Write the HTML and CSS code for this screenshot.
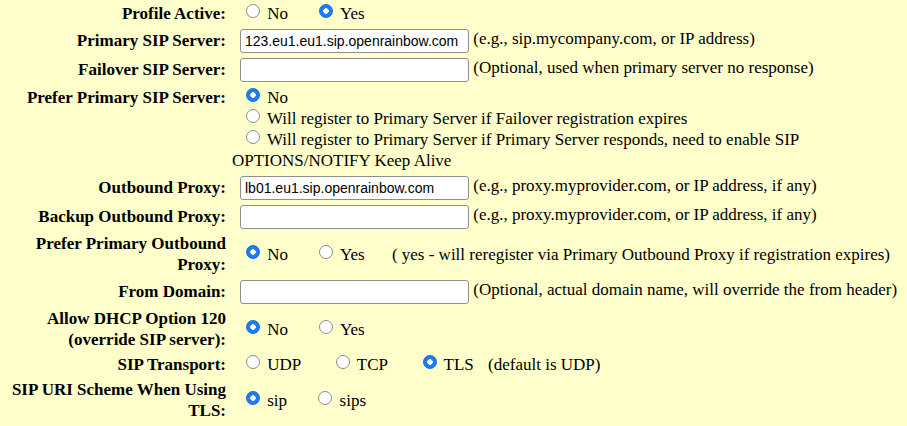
FILE: index.html
```html
<!DOCTYPE html>
<html lang="en">
<head>
    <meta charset="UTF-8">
    <meta name="viewport" content="width=device-width, initial-scale=1.0">
    <title>Account - SIP Settings</title>
    <link rel="stylesheet" href="styles.css">
</head>

<body>
    <table class="form">
        <colgroup>
            <col class="col-lbl">
            <col>
        </colgroup>
        <tr>
            <td class="lbl">Profile Active:</td>
            <td class="val">
                <label class="opt"><input type="radio" name="active"> No</label>
                <label class="opt"><input type="radio" name="active" checked> Yes</label>
            </td>
        </tr>
        <tr>
            <td class="lbl">Primary SIP Server:</td>
            <td class="val"><input class="txt" type="text" value="123.eu1.eu1.sip.openrainbow.com"> (e.g., sip.mycompany.com, or IP address)</td>
        </tr>
        <tr>
            <td class="lbl">Failover SIP Server:</td>
            <td class="val"><input class="txt" type="text" value=""> (Optional, used when primary server no response)</td>
        </tr>
        <tr class="top">
            <td class="lbl">Prefer Primary SIP Server:</td>
            <td class="val">
                <label class="opt"><input type="radio" name="prefer" checked> No</label><br>
                <label class="opt"><input type="radio" name="prefer"> Will register to Primary Server if Failover registration expires</label><br>
                <label class="opt"><input type="radio" name="prefer"> Will register to Primary Server if Primary Server responds, need to enable SIP OPTIONS/NOTIFY Keep Alive</label>
            </td>
        </tr>
        <tr>
            <td class="lbl">Outbound Proxy:</td>
            <td class="val"><input class="txt" type="text" value="lb01.eu1.sip.openrainbow.com"> (e.g., proxy.myprovider.com, or IP address, if any)</td>
        </tr>
        <tr>
            <td class="lbl">Backup Outbound Proxy:</td>
            <td class="val"><input class="txt" type="text" value=""> (e.g., proxy.myprovider.com, or IP address, if any)</td>
        </tr>
        <tr>
            <td class="lbl">Prefer Primary Outbound Proxy:</td>
            <td class="val">
                <label class="opt"><input type="radio" name="proxy" checked> No</label>
                <label class="opt"><input type="radio" name="proxy"> Yes</label>
                <span class="note">( yes - will reregister via Primary Outbound Proxy if registration expires)</span>
            </td>
        </tr>
        <tr>
            <td class="lbl">From Domain:</td>
            <td class="val"><input class="txt" type="text" value=""> (Optional, actual domain name, will override the from header)</td>
        </tr>
        <tr>
            <td class="lbl">Allow DHCP Option 120 (override SIP server):</td>
            <td class="val">
                <label class="opt"><input type="radio" name="dhcp" checked> No</label>
                <label class="opt"><input type="radio" name="dhcp"> Yes</label>
            </td>
        </tr>
        <tr class="wide">
            <td class="lbl">SIP Transport:</td>
            <td class="val">
                <label class="opt"><input type="radio" name="transport"> UDP</label>
                <label class="opt"><input type="radio" name="transport"> TCP</label>
                <label class="opt"><input type="radio" name="transport" checked> TLS</label>
                <span class="hint">(default is UDP)</span>
            </td>
        </tr>
        <tr>
            <td class="lbl">SIP URI Scheme When Using TLS:</td>
            <td class="val">
                <label class="opt"><input type="radio" name="scheme" checked> sip</label>
                <label class="opt"><input type="radio" name="scheme"> sips</label>
            </td>
        </tr>
    </table>
</body>

</html>
```

FILE: styles.css
```css
body {
    margin: 0;
    background-color: #ffffcc;
    font-family: "Liberation Serif", "Times New Roman", serif;
    font-size: 17px;
    color: #000;
}

.form {
    width: 100%;
    margin-top: 1px;
    border-spacing: 0;
    table-layout: fixed;
    line-height: 21px;
}

.col-lbl {
    width: 226px;
}

.form td {
    padding: 2px 0;
    vertical-align: middle;
}

.form .lbl {
    text-align: right;
    font-weight: bold;
    line-height: 21px;
}

.form .val {
    padding-left: 6px;
}

.form .top td {
    padding-top: 3px;
}

.form .top .lbl {
    vertical-align: top;
}

.txt {
    width: 229px;
    height: 24px;
    box-sizing: border-box;
    margin: 1px 0 0 8px;
    padding: 0 4px;
    border: 1px solid #8f8f8f;
    border-radius: 3px;
    background: #fff;
    font-family: "Liberation Sans", Arial, sans-serif;
    font-size: 14px;
    color: #000;
    vertical-align: middle;
}

.opt {
    margin-left: 14px;
}

.opt + .opt {
    margin-left: 27px;
}

.wide .opt + .opt {
    margin-left: 31px;
}

input[type="radio"] {
    appearance: none;
    -webkit-appearance: none;
    display: inline-block;
    width: 14px;
    height: 14px;
    box-sizing: border-box;
    margin: 0 3px 1px 0;
    border: 1px solid #8c8c8c;
    border-radius: 50%;
    background: #fff;
    vertical-align: baseline;
}

input[type="radio"]:checked {
    border-color: #1768e0;
    background: radial-gradient(circle, #fff 0 2.5px, #1a7cf7 3px);
}

.note {
    margin-left: 23px;
}

.hint {
    margin-left: 10px;
}
```
